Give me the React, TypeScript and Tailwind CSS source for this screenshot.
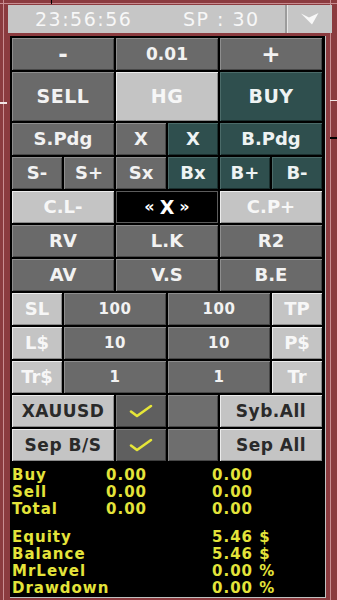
import React from "react";

type V = "dark" | "light" | "teal" | "black" | "check" | "empty" | "lightdark";

const variants: Record<V, string> = {
  dark: "bg-[#6a6a6a] text-[#f2f2f2] shadow-[inset_1px_1px_0_#8e8e8e,inset_-1px_-1px_0_#474747]",
  light: "bg-[#c4c4c4] text-[#f7f7f7] shadow-[inset_1px_1px_0_#ececec,inset_-1px_-1px_0_#8a8a8a]",
  lightdark: "bg-[#c4c4c4] text-[#2a2a2a] shadow-[inset_1px_1px_0_#ececec,inset_-1px_-1px_0_#8a8a8a]",
  teal: "bg-[#2f4f4e] text-[#eef3f3] shadow-[inset_1px_1px_0_#4b6b69,inset_-1px_-1px_0_#1a2f2e]",
  black: "bg-black text-white border border-[#5c5c5c]",
  check: "bg-[#5f5f5f] shadow-[inset_1px_1px_0_#7a7a7a,inset_-1px_-1px_0_#3e3e3e]",
  empty: "bg-[#6e6e6e] shadow-[inset_1px_1px_0_#8a8a8a,inset_-1px_-1px_0_#474747]",
};

function Btn({
  v,
  span,
  className = "",
  children,
}: {
  v: V;
  span?: string;
  className?: string;
  children?: React.ReactNode;
}) {
  return (
    <div
      className={`flex items-center justify-center font-bold leading-none select-none ${variants[v]} ${span ?? ""} ${className}`}
    >
      {children}
    </div>
  );
}

function Check() {
  return (
    <svg width="26" height="14" viewBox="0 0 26 14">
      <path d="M3 7.5 L9 12 L23 2" fill="none" stroke="#e6e638" strokeWidth="2.6" strokeLinecap="round" strokeLinejoin="round" />
    </svg>
  );
}

const S = "col-span-1";
const D = "col-span-2";
const NUM = "text-[15px] text-[#e8ebf2] tracking-[0.5px]";
const LBL = "text-[17px] tracking-[0.5px]";

export default function App() {
  return (
    <div className="relative w-[337px] h-[600px] overflow-hidden bg-[#8b3b3f] font-['DejaVu_Sans',sans-serif]">
      {/* chart decorations behind the panel */}
      <div className="absolute left-[3px] top-0 h-full w-px bg-[#c88d91]" />
      <div className="absolute left-[330px] top-0 h-full w-px bg-[#c88d91]" />
      <div className="absolute left-0 top-[3px] w-full h-px bg-[#c88d91]" />
      <div className="absolute left-0 top-[102px] w-[7px] h-[2px] bg-[#f0e6e6]" />
      <div className="absolute left-[330px] top-[100px] w-[7px] h-px bg-[#f0e6e6]" />
      <div className="absolute left-[330px] top-[137px] w-[7px] h-[2px] bg-black" />
      <div className="absolute left-[51px] top-0 w-px h-[4px] bg-black" />

      <div className="relative pt-[5px] pl-[8px]">
        {/* title bar */}
        <div className="flex h-[28px] w-[324px] bg-[#c6c6c6] text-[#f7f7f7]">
          <div className="flex flex-1 items-center text-[19px] tracking-[1.5px] leading-none">
            <span className="pl-[27px] w-[175px]">23:56:56</span>
            <span>SP : 30</span>
          </div>
          <div className="flex w-[47px] items-center justify-center border-l-2 border-l-[#9c9c9c] shadow-[inset_1px_0_0_#e6e6e6]">
            <svg width="18" height="12" viewBox="0 0 18 12">
              <path d="M0 0.5 L8 4.5 L17.5 0 L11 11.5 Z" fill="#f8f8f8" />
            </svg>
          </div>
        </div>

        {/* panel */}
        <div className="mt-[3px] ml-[2px] h-[562px] w-[316px] bg-black pt-[2px] pl-[2px] pr-[3px] border-r border-b border-[#c0c0c0]">
          <div className="grid grid-cols-[repeat(6,50px)] grid-rows-[32px_49px_repeat(10,32px)] gap-[2px] text-[18px]">
            <Btn v="dark" span={D} className="text-[23px]">-</Btn>
            <Btn v="dark" span={D} className="text-[17px] text-[#ececec]">0.01</Btn>
            <Btn v="dark" span={D} className="text-[23px]">+</Btn>

            <Btn v="dark" span={D} className="text-[19px] tracking-[0.5px]">SELL</Btn>
            <Btn v="light" span={D} className="text-[19px] tracking-[0.5px]">HG</Btn>
            <Btn v="teal" span={D} className="text-[19px] tracking-[0.5px]">BUY</Btn>

            <Btn v="dark" span={D}>S.Pdg</Btn>
            <Btn v="dark" span={S}>X</Btn>
            <Btn v="teal" span={S}>X</Btn>
            <Btn v="teal" span={D}>B.Pdg</Btn>

            <Btn v="dark" span={S}>S-</Btn>
            <Btn v="dark" span={S}>S+</Btn>
            <Btn v="dark" span={S}>Sx</Btn>
            <Btn v="teal" span={S}>Bx</Btn>
            <Btn v="teal" span={S}>B+</Btn>
            <Btn v="teal" span={S}>B-</Btn>

            <Btn v="light" span={D}>C.L-</Btn>
            <Btn v="black" span={D}>
              <span className="text-[16px]">&laquo;</span>
              <span className="mx-[5px] text-[19px]">X</span>
              <span className="text-[16px]">&raquo;</span>
            </Btn>
            <Btn v="light" span={D}>C.P+</Btn>

            <Btn v="dark" span={D}>RV</Btn>
            <Btn v="dark" span={D}>L.K</Btn>
            <Btn v="dark" span={D}>R2</Btn>

            <Btn v="dark" span={D}>AV</Btn>
            <Btn v="dark" span={D}>V.S</Btn>
            <Btn v="dark" span={D}>B.E</Btn>

            <Btn v="light" span={S}>SL</Btn>
            <Btn v="dark" span={D} className={NUM}>100</Btn>
            <Btn v="dark" span={D} className={NUM}>100</Btn>
            <Btn v="light" span={S}>TP</Btn>

            <Btn v="light" span={S}>L$</Btn>
            <Btn v="dark" span={D} className={NUM}>10</Btn>
            <Btn v="dark" span={D} className={NUM}>10</Btn>
            <Btn v="light" span={S}>P$</Btn>

            <Btn v="light" span={S}>Tr$</Btn>
            <Btn v="dark" span={D} className={NUM}>1</Btn>
            <Btn v="dark" span={D} className={NUM}>1</Btn>
            <Btn v="light" span={S}>Tr</Btn>

            <Btn v="lightdark" span={D} className={LBL}>XAUUSD</Btn>
            <Btn v="check" span={S}><Check /></Btn>
            <Btn v="empty" span={S} />
            <Btn v="lightdark" span={D} className={LBL}>Syb.All</Btn>

            <Btn v="lightdark" span={D} className={LBL}>Sep B/S</Btn>
            <Btn v="check" span={S}><Check /></Btn>
            <Btn v="empty" span={S} />
            <Btn v="lightdark" span={D} className={LBL}>Sep All</Btn>
          </div>

          {/* info */}
          <div className="mt-[6px] text-[15px] font-bold leading-[17px] tracking-[1px] text-[#e4e43a]">
            <div className="grid grid-cols-[94px_106px_auto]">
              <span>Buy</span><span>0.00</span><span>0.00</span>
              <span>Sell</span><span>0.00</span><span>0.00</span>
              <span>Total</span><span>0.00</span><span>0.00</span>
            </div>
            <div className="mt-[11px] grid grid-cols-[200px_auto]">
              <span>Equity</span><span>5.46 $</span>
              <span>Balance</span><span>5.46 $</span>
              <span>MrLevel</span><span>0.00 %</span>
              <span>Drawdown</span><span>0.00 %</span>
            </div>
          </div>
        </div>
      </div>
    </div>
  );
}
